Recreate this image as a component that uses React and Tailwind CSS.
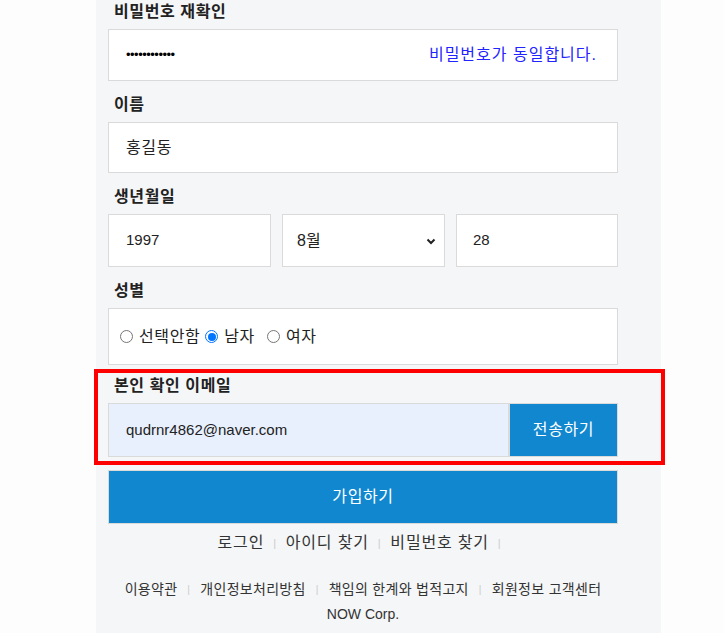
import React from "react";

const font = { fontFamily: '"Liberation Sans", "Noto Sans CJK KR", sans-serif' };

const Label = ({ children, className = "pt-[14px]" }) => (
  <div className={`${className} pl-[6px] pb-[7px]`}>
    <span className="block text-[16px] leading-[20px] font-bold tracking-[0.6px] text-[#222]">{children}</span>
  </div>
);

const Radio = ({ checked, label, className = "" }) => (
  <label className={`flex items-center ${className}`}>
    {checked ? (
      <span className="w-[13px] h-[13px] rounded-full border-[1px] border-[#0075ff] flex items-center justify-center mr-[6px]">
        <span className="w-[8px] h-[8px] rounded-full bg-[#0075ff]" />
      </span>
    ) : (
      <span className="w-[13px] h-[13px] rounded-full border-[1px] border-[#767676] bg-white mr-[6px]" />
    )}
    <span className="text-[16px] tracking-[0.6px] text-[#222]">{label}</span>
  </label>
);

const Sep = ({ size = "text-[11px]", mx = "mx-[9px]" }) => (
  <span className={`${size} ${mx} text-[#ccc]`}>|</span>
);

export default function App() {
  return (
    <div className="relative min-h-[633px] bg-[#fdfdfd] overflow-hidden" style={font}>
      <div className="ml-[96px] w-[565px] min-h-[633px] bg-[#f5f6f7] pl-[12px]">
        <div className="w-[510px]">
          {/* 비밀번호 재확인 */}
          <Label className="pt-[2px]">비밀번호 재확인</Label>
          <div className="h-[52px] bg-white border border-[#dadada] flex items-center justify-between pl-[17px] pr-[20px]">
            <span className="text-[13px] tracking-[-0.5px] text-black">••••••••••••</span>
            <span className="text-[16px] tracking-[1px] text-[#2323ff]">비밀번호가 동일합니다.</span>
          </div>

          {/* 이름 */}
          <Label>이름</Label>
          <div className="h-[51px] bg-white border border-[#dadada] flex items-center pl-[17px]">
            <span className="text-[16px] tracking-[0.6px] text-[#222]">홍길동</span>
          </div>

          {/* 생년월일 */}
          <Label>생년월일</Label>
          <div className="flex gap-[11px]">
            <div className="w-[163px] h-[53px] bg-white border border-[#dadada] flex items-center pl-[17px]">
              <span className="text-[15px] text-[#222]">1997</span>
            </div>
            <div className="w-[163px] h-[53px] bg-white border border-[#dadada] flex items-center justify-between pl-[14px] pr-[7px]">
              <span className="text-[16px] text-[#222]">8월</span>
              <svg width="12" height="12" viewBox="0 0 12 12">
                <path d="M2.5 4.5 L6 8 L9.5 4.5" fill="none" stroke="#222" strokeWidth="2" />
              </svg>
            </div>
            <div className="w-[162px] h-[53px] bg-white border border-[#dadada] flex items-center pl-[16px]">
              <span className="text-[15px] text-[#222]">28</span>
            </div>
          </div>

          {/* 성별 */}
          <Label>성별</Label>
          <div className="h-[57px] bg-white border border-[#dadada] flex items-center pl-[11px]">
            <Radio label="선택안함" className="mr-[5px]" />
            <Radio checked label="남자" className="mr-[12px]" />
            <Radio label="여자" />
          </div>

          {/* 본인 확인 이메일 */}
          <Label className="pt-[11px]">본인 확인 이메일</Label>
          <div className="flex h-[54px]">
            <div className="w-[401px] bg-[#e8f0fe] border border-[#dadada] flex items-center pl-[17px]">
              <span className="text-[15px] text-[#222]">qudrnr4862@naver.com</span>
            </div>
            <button className="flex-1 bg-[#1087cf] border border-[#dadada] text-white text-[16px] tracking-[0.6px]">
              전송하기
            </button>
          </div>

          {/* 가입하기 */}
          <button className="mt-[13px] w-full h-[54px] bg-[#1187cf] border border-[#dadada] text-white text-[16px] tracking-[0.6px]">
            가입하기
          </button>

          {/* links */}
          <div className="mt-[7px] flex items-center justify-center text-[16px] tracking-[0.8px] leading-[24px] text-[#333] pl-[2px]">
            <span>로그인</span>
            <Sep />
            <span>아이디 찾기</span>
            <Sep />
            <span>비밀번호 찾기</span>
            <Sep />
          </div>

          {/* footer */}
          <div className="mt-[22px] text-center text-[14px] leading-[25px] text-[#333]">
            <div className="flex items-center justify-center tracking-[0.3px]">
              <span>이용약관</span>
              <Sep size="text-[10px]" mx="mx-[10px]" />
              <span>개인정보처리방침</span>
              <Sep size="text-[10px]" mx="mx-[10px]" />
              <span>책임의 한계와 법적고지</span>
              <Sep size="text-[10px]" mx="mx-[10px]" />
              <span>회원정보 고객센터</span>
            </div>
            <div>NOW Corp.</div>
          </div>
        </div>
      </div>

      {/* highlight annotation */}
      <div className="absolute left-[94px] top-[369px] w-[571px] h-[96px] border-[4px] border-[#ff0000] pointer-events-none" />
    </div>
  );
}
